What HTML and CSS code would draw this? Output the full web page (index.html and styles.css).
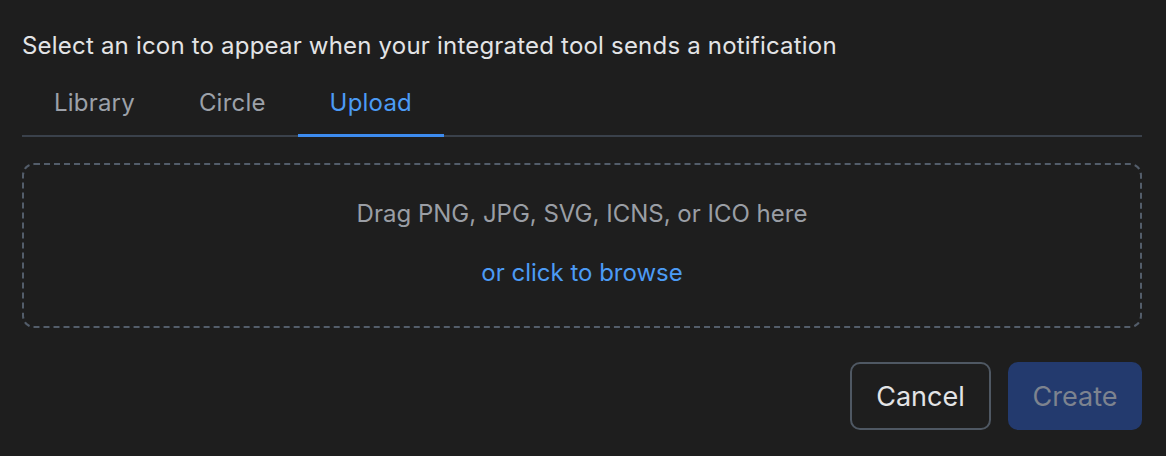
FILE: index.html
```html
<!DOCTYPE html>
<html lang="en">
<head>
  <meta charset="UTF-8">
  <title>Notification Icon</title>
  <link rel="stylesheet" href="styles.css">
</head>
<body>
  <main class="dialog">
    <p class="prompt">Select an icon to appear when your integrated tool sends a notification</p>

    <nav class="tabs">
      <button class="tab">Library</button>
      <button class="tab">Circle</button>
      <button class="tab active">Upload</button>
    </nav>

    <div class="dropzone">
      <span class="drop-hint">Drag PNG, JPG, SVG, ICNS, or ICO here</span>
      <a class="browse" href="#">or click to browse</a>
    </div>

    <footer class="actions">
      <button class="btn btn-cancel">Cancel</button>
      <button class="btn btn-create" disabled>Create</button>
    </footer>
  </main>
</body>
</html>
```

FILE: styles.css
```css
html, body {
  margin: 0;
  padding: 0;
  background: #1e1e1e;
}

body {
  font-family: 'Inter', 'Noto Sans', sans-serif;
  color: #e1e2e4;
}

.dialog {
  padding: 30px 24px 0 22px;
}

.prompt {
  margin: 0;
  font-size: 24px;
  letter-spacing: 0.2px;
  line-height: 32px;
  color: #e3e4e6;
}

.tabs {
  display: flex;
  border-bottom: 2px solid #3a414b;
}

.tab {
  background: none;
  border: none;
  font-family: inherit;
  font-size: 24px;
  letter-spacing: 0.2px;
  line-height: 30px;
  color: #9ca1a9;
  padding: 26px 32px 16px;
  margin-bottom: -2px;
  border-bottom: 3px solid transparent;
  cursor: pointer;
}

.tab.active {
  color: #4c9bf5;
  border-bottom-color: #3d8cf0;
}

.dropzone {
  margin-top: 26px;
  height: 157px;
  padding-bottom: 4px;
  border: 2px dashed #535d6a;
  border-radius: 12px;
  display: flex;
  flex-direction: column;
  align-items: center;
  justify-content: center;
  gap: 29px;
  font-size: 24px;
  line-height: 30px;
}

.drop-hint {
  color: #9a9ea5;
}

.browse {
  color: #4c9bf5;
  text-decoration: none;
}

.actions {
  display: flex;
  justify-content: flex-end;
  gap: 17px;
  margin-top: 34px;
}

.btn {
  font-family: inherit;
  font-size: 27px;
  height: 68px;
  border-radius: 10px;
  cursor: pointer;
}

.btn-cancel {
  width: 141px;
  background: transparent;
  color: #e3e4e6;
  border: 2px solid #4f5863;
}

.btn-create {
  width: 134px;
  background: #233a6e;
  color: #7d838f;
  border: none;
}
```
